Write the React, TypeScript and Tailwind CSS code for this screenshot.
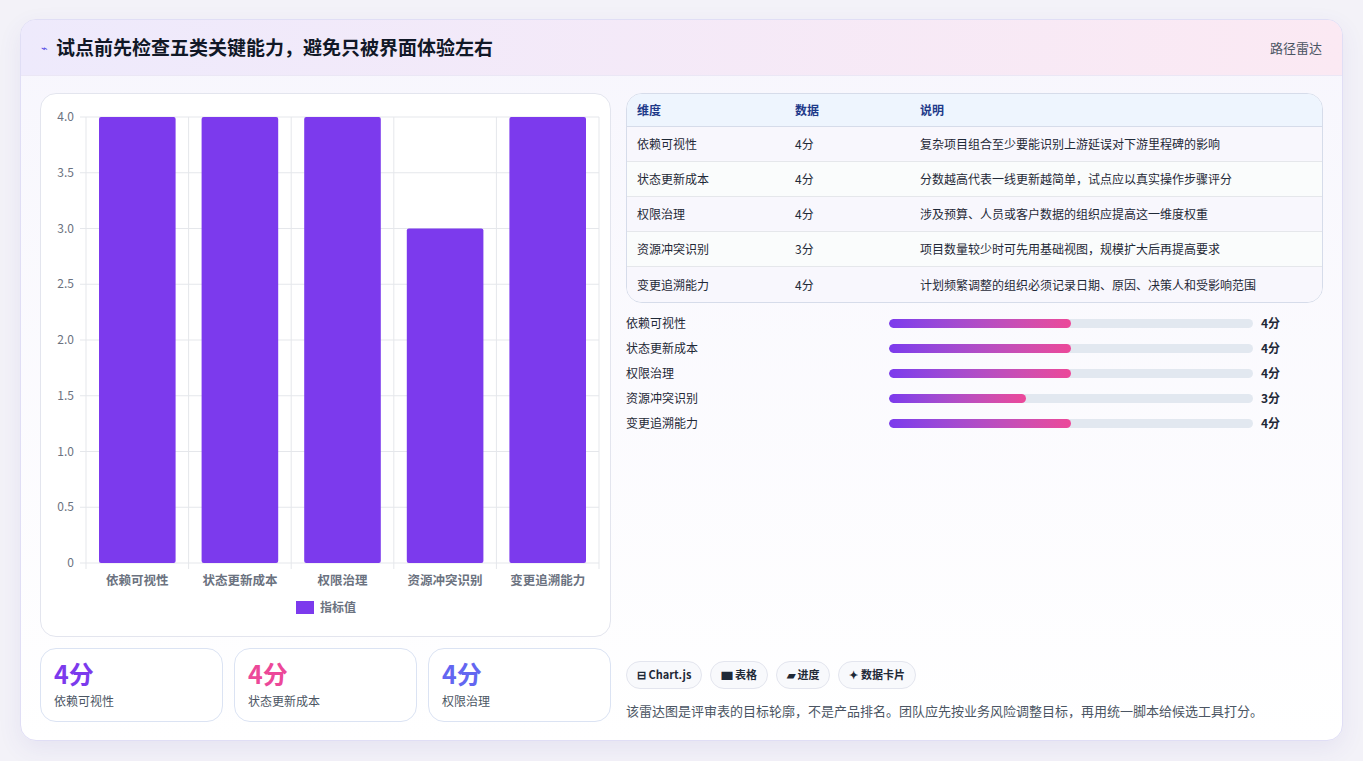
import React from "react";

const dims = ["依赖可视性", "状态更新成本", "权限治理", "资源冲突识别", "变更追溯能力"];
const vals = [4, 4, 4, 3, 4];
const notes = [
  "复杂项目组合至少要能识别上游延误对下游里程碑的影响",
  "分数越高代表一线更新越简单，试点应以真实操作步骤评分",
  "涉及预算、人员或客户数据的组织应提高这一维度权重",
  "项目数量较少时可先用基础视图，规模扩大后再提高要求",
  "计划频繁调整的组织必须记录日期、原因、决策人和受影响范围",
];

function Chart() {
  const L = 45, R = 558, T = 23, B = 469;
  const step = (B - T) / 8;
  const cw = (R - L) / 5;
  return (
    <svg width="570" height="541" className="block">
      {Array.from({ length: 9 }).map((_, i) => {
        const y = B - i * step;
        return (
          <g key={i}>
            <line x1={L - 6} x2={R} y1={y} y2={y} stroke="#e5e7eb" />
            <text x={L - 12} y={y + 4} textAnchor="end" fontSize="12" fill="#6b7280">
              {i === 0 ? "0" : (i * 0.5).toFixed(1)}
            </text>
          </g>
        );
      })}
      {Array.from({ length: 6 }).map((_, i) => (
        <line key={i} x1={L + i * cw} x2={L + i * cw} y1={T} y2={B + 6} stroke="#e5e7eb" />
      ))}
      {vals.map((v, i) => {
        const h = v * 2 * step;
        return (
          <g key={i}>
            <rect x={L + i * cw + 13} y={B - h} width={cw - 26} height={h} rx="2" fill="#7c3aed" />
            <text x={L + i * cw + cw / 2} y={B + 22} textAnchor="middle" fontSize="12.5" fill="#6b7280" fontWeight="600">
              {dims[i]}
            </text>
          </g>
        );
      })}
      <rect x="255" y="507" width="18" height="13" fill="#7c3aed" />
      <text x="279" y="518" fontSize="12" fill="#6b7280" fontWeight="600">指标值</text>
    </svg>
  );
}

export default function App() {
  const font = { fontFamily: '"Noto Sans CJK SC", "Noto Sans", sans-serif' };
  return (
    <div className="w-[1363px] h-[761px] bg-[#f3f2f8] pt-[19px] px-[20px]" style={font}>
      <div className="h-[722px] rounded-2xl border border-[#e0def5] bg-gradient-to-b from-[#f7f6fd] to-white overflow-hidden shadow-[0_8px_24px_rgba(80,70,160,0.08)] flex flex-col">
        <div className="h-[56px] shrink-0 flex items-center justify-between px-[20px] bg-gradient-to-r from-[#eeeafc] to-[#fbe9f3] border-b border-[#ebe7f5]">
          <div className="flex items-center gap-2">
            <span className="text-[#4f46e5] text-[11px]">⌁</span>
            <span className="text-[19px] font-bold text-[#111827]">试点前先检查五类关键能力，避免只被界面体验左右</span>
          </div>
          <span className="text-[13px] text-[#4b5563]">路径雷达</span>
        </div>
        <div className="flex-1 flex gap-[15px] px-[19px] pt-[17px] pb-[18px]">
          <div className="w-[571px] flex flex-col gap-[11px]">
            <div className="h-[544px] rounded-2xl border border-[#e3e5ee] bg-white">
              <Chart />
            </div>
            <div className="flex gap-[11px] flex-1">
              {[["#7c3aed", dims[0]], ["#ec4899", dims[1]], ["#6366f1", dims[2]]].map(([c, l]) => (
                <div key={l} className="flex-1 rounded-2xl border border-[#dbe3f3] bg-white px-[13px] pt-[9px]">
                  <div className="text-[25px] font-bold leading-[30px]" style={{ color: c }}>4分</div>
                  <div className="text-[12px] text-[#4b5563] mt-[4px]">{l}</div>
                </div>
              ))}
            </div>
          </div>
          <div className="flex-1 flex flex-col">
            <div className="rounded-2xl border border-[#d6dcea] bg-white overflow-hidden text-[12px]">
              <div className="flex h-[33px] items-center bg-[#eef5fe] border-b border-[#d6dcea] text-[#1e3a8a] font-semibold">
                <div className="w-[168px] pl-[10px]">维度</div>
                <div className="w-[125px]">数据</div>
                <div>说明</div>
              </div>
              {dims.map((d, i) => (
                <div key={d} className={`flex h-[35px] items-center text-[#1f2937] ${i % 2 === 0 ? "bg-[#f8f7fd]" : "bg-[#fafcfc]"} ${i < 4 ? "border-b border-[#e5e7eb]" : ""}`}>
                  <div className="w-[168px] pl-[10px]">{d}</div>
                  <div className="w-[125px]">{vals[i]}分</div>
                  <div>{notes[i]}</div>
                </div>
              ))}
            </div>
            <div className="flex flex-col gap-[11px] mt-[13px] text-[12px] text-[#1f2937]">
              {dims.map((d, i) => (
                <div key={d} className="flex items-center h-[14px]">
                  <div className="w-[263px]">{d}</div>
                  <div className="w-[364px] h-[9px] rounded-full bg-[#e2e8f0] overflow-hidden">
                    <div className="h-full rounded-full bg-gradient-to-r from-[#7c3aed] to-[#ec4899]" style={{ width: `${(vals[i] / 8) * 100}%` }} />
                  </div>
                  <div className="ml-[8px] font-bold">{vals[i]}分</div>
                </div>
              ))}
            </div>
            <div className="flex-1" />
            <div className="flex gap-[8px] text-[11px] font-semibold text-[#1f2937]">
              {["⊟ Chart.js", "▆ 表格", "▰ 进度", "✦ 数据卡片"].map((t) => (
                <span key={t} className="h-[28px] px-[10px] flex items-center rounded-full border border-[#e3e5ee] bg-[#f8f9fc]">{t}</span>
              ))}
            </div>
            <div className="text-[13px] text-[#4b5563] mt-[12px] mb-[2px]">该雷达图是评审表的目标轮廓，不是产品排名。团队应先按业务风险调整目标，再用统一脚本给候选工具打分。</div>
          </div>
        </div>
      </div>
    </div>
  );
}
